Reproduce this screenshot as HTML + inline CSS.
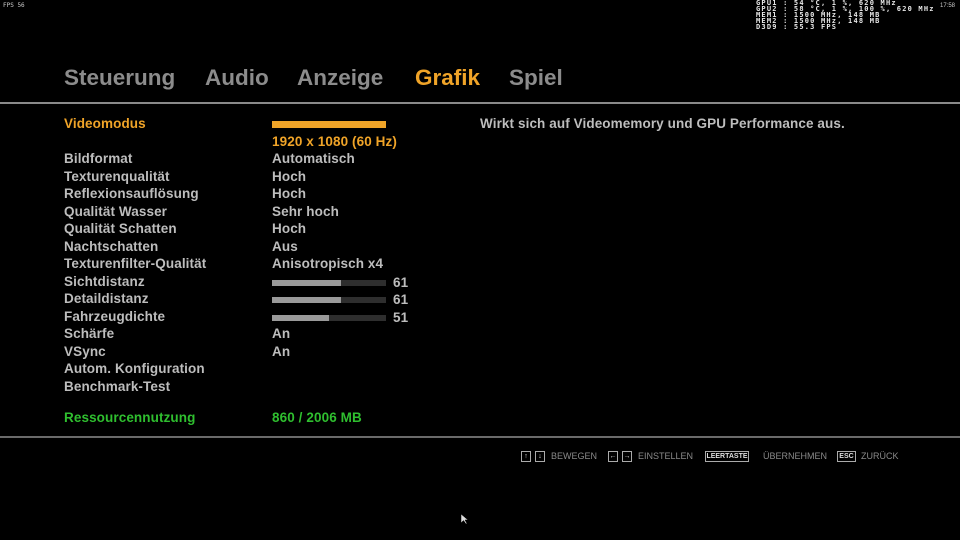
<!DOCTYPE html>
<html><head><meta charset="utf-8"><style>
body{margin:0;width:960px;height:540px;background:#000;overflow:hidden;position:relative;font-family:"Liberation Sans",Arial,sans-serif;}
.a{position:absolute;white-space:nowrap}
.tab{font-size:22.5px;font-weight:bold;color:#8c8c8c;top:65px}
.l,.v,.num{font-size:13.5px;font-weight:bold;color:#bdbdbd;line-height:17.5px;letter-spacing:0.1px}
.l{left:64px}
.v{left:272px}
.num{left:393px}
.bar{position:absolute;left:272px;width:114px;height:6px;background:#2e2e2e}
.bar i{display:block;height:6px;background:#9a9a9a}
.osd{font-family:"DejaVu Sans Mono",monospace;font-weight:bold;font-size:7px;color:#e8e8e8;line-height:6px;left:756px;top:0px;letter-spacing:1.2px}
.f{font-size:9px;color:#8a8a8a;top:451px}
.k{position:absolute;border:1px solid #aaa;color:#ddd;font-size:7px;font-weight:bold;top:451px;height:9px;line-height:9px;text-align:center}
</style></head><body>
<div class="a" style="font-size:6px;color:#ccc;left:3px;top:2px;font-family:'DejaVu Sans Mono',monospace">FPS 56</div>
<div class="a osd">GPU1 : 54 °C, 1 %, 620 MHz<br>GPU2 : 58 °C, 1 %, 100 %, 620 MHz<br>MEM1 : 1500 MHz, 148 MB<br>MEM2 : 1500 MHz, 148 MB<br>D3D9 : 55.3 FPS</div>
<div class="a" style="font-size:6px;color:#ccc;left:940px;top:3px">17:58</div>

<div class="a tab" style="left:64px">Steuerung</div>
<div class="a tab" style="left:205px">Audio</div>
<div class="a tab" style="left:297px">Anzeige</div>
<div class="a tab" style="left:415px;color:#f0a428">Grafik</div>
<div class="a tab" style="left:509px">Spiel</div>
<div class="a" style="left:0;top:102px;width:960px;height:2px;background:#8a8a8a"></div>

<div class="a l" style="top:115px;color:#f0a428">Videomodus</div>
<div class="bar" style="top:121px;background:#f0a428;height:7px"></div>
<div class="a v" style="top:132.5px;color:#f0a428">1920 x 1080 (60 Hz)</div>
<div class="a l" style="top:150px">Bildformat</div><div class="a v" style="top:150px">Automatisch</div>
<div class="a l" style="top:167.5px">Texturenqualität</div><div class="a v" style="top:167.5px">Hoch</div>
<div class="a l" style="top:185px">Reflexionsauflösung</div><div class="a v" style="top:185px">Hoch</div>
<div class="a l" style="top:202.5px">Qualität Wasser</div><div class="a v" style="top:202.5px">Sehr hoch</div>
<div class="a l" style="top:220px">Qualität Schatten</div><div class="a v" style="top:220px">Hoch</div>
<div class="a l" style="top:237.5px">Nachtschatten</div><div class="a v" style="top:237.5px">Aus</div>
<div class="a l" style="top:255px">Texturenfilter-Qualität</div><div class="a v" style="top:255px">Anisotropisch x4</div>
<div class="a l" style="top:272.5px">Sichtdistanz</div><div class="bar" style="top:280px"><i style="width:69px"></i></div><div class="a num" style="top:273.5px">61</div>
<div class="a l" style="top:290px">Detaildistanz</div><div class="bar" style="top:297px"><i style="width:69px"></i></div><div class="a num" style="top:291px">61</div>
<div class="a l" style="top:307.5px">Fahrzeugdichte</div><div class="bar" style="top:314.5px"><i style="width:57px"></i></div><div class="a num" style="top:308.5px">51</div>
<div class="a l" style="top:325px">Schärfe</div><div class="a v" style="top:325px">An</div>
<div class="a l" style="top:342.5px">VSync</div><div class="a v" style="top:342.5px">An</div>
<div class="a l" style="top:360px">Autom. Konfiguration</div>
<div class="a l" style="top:377.5px">Benchmark-Test</div>
<div class="a l" style="top:408.5px;color:#2fbf2f">Ressourcennutzung</div><div class="a v" style="top:408.5px;color:#2fbf2f">860 / 2006 MB</div>
<div class="a l" style="left:480px;top:115px">Wirkt sich auf Videomemory und GPU Performance aus.</div>
<div class="a" style="left:0;top:436px;width:960px;height:2px;background:#6a6a6a"></div>

<div class="k" style="left:521px;width:8px">↑</div><div class="k" style="left:535px;width:8px">↓</div>
<div class="a f" style="left:551px">BEWEGEN</div>
<div class="k" style="left:608px;width:8px">←</div><div class="k" style="left:622px;width:8px">→</div>
<div class="a f" style="left:638px">EINSTELLEN</div>
<div class="k" style="left:705px;width:42px">LEERTASTE</div>
<div class="a f" style="left:763px">ÜBERNEHMEN</div>
<div class="k" style="left:837px;width:17px">ESC</div>
<div class="a f" style="left:861px">ZURÜCK</div>
<svg class="a" style="left:460px;top:513px" width="10" height="12"><path d="M1 1 L1 10 L3.5 7.5 L6 11 L7 10.5 L5 7 L8 7 Z" fill="#ddd" stroke="#000" stroke-width="0.5"/></svg>
</body></html>
